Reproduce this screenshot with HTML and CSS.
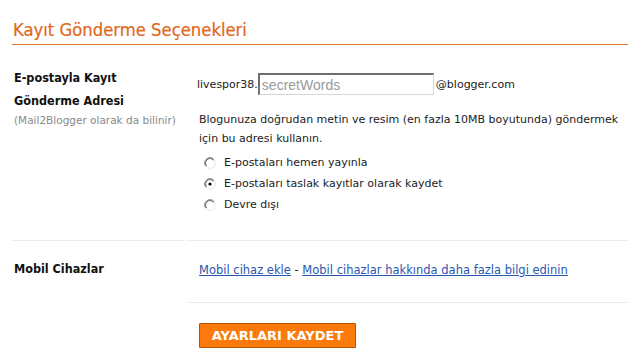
FILE: index.html
```html
<!DOCTYPE html>
<html lang="tr">
<head>
<meta charset="utf-8">
<title>Kayıt Gönderme Seçenekleri</title>
<link rel="stylesheet" href="styles.css">
</head>
<body>
<div class="page">
  <h2 class="title">Kayıt Gönderme Seçenekleri</h2>
  <div class="settings">
    <div class="label-cell row1">
      <div class="label">E-postayla Kayıt<br>Gönderme Adresi</div>
      <div class="note">(Mail2Blogger olarak da bilinir)</div>
    </div>
    <div class="content-cell row1">
      <div class="email-line">
        <span>livespor38.</span><input class="email-input" type="text" value="secretWords"><span>@blogger.com</span>
      </div>
      <p class="desc">Blogunuza doğrudan metin ve resim (en fazla 10MB boyutunda) göndermek için bu adresi kullanın.</p>
      <div class="radios">
        <label class="radio-row">
          <svg class="radio" width="12" height="12" viewBox="0 0 12 12"><path d="M10.2 2.6 A5.2 5.2 0 0 0 1.8 9.4" fill="none" stroke="#808080" stroke-width="1"/><path d="M9.4 3.3 A4.2 4.2 0 0 0 2.6 8.7" fill="none" stroke="#404040" stroke-width="1"/><path d="M1.8 9.4 A5.2 5.2 0 0 0 10.2 2.6" fill="none" stroke="#e8e8e8" stroke-width="1"/><circle cx="6" cy="6" r="3.7" fill="#fff"/></svg>
          <span>E-postaları hemen yayınla</span>
        </label>
        <label class="radio-row">
          <svg class="radio" width="12" height="12" viewBox="0 0 12 12"><path d="M10.2 2.6 A5.2 5.2 0 0 0 1.8 9.4" fill="none" stroke="#808080" stroke-width="1"/><path d="M9.4 3.3 A4.2 4.2 0 0 0 2.6 8.7" fill="none" stroke="#404040" stroke-width="1"/><path d="M1.8 9.4 A5.2 5.2 0 0 0 10.2 2.6" fill="none" stroke="#e8e8e8" stroke-width="1"/><circle cx="6" cy="6" r="3.7" fill="#fff"/><circle cx="6" cy="6" r="1.6" fill="#000"/></svg>
          <span>E-postaları taslak kayıtlar olarak kaydet</span>
        </label>
        <label class="radio-row">
          <svg class="radio" width="12" height="12" viewBox="0 0 12 12"><path d="M10.2 2.6 A5.2 5.2 0 0 0 1.8 9.4" fill="none" stroke="#808080" stroke-width="1"/><path d="M9.4 3.3 A4.2 4.2 0 0 0 2.6 8.7" fill="none" stroke="#404040" stroke-width="1"/><path d="M1.8 9.4 A5.2 5.2 0 0 0 10.2 2.6" fill="none" stroke="#e8e8e8" stroke-width="1"/><circle cx="6" cy="6" r="3.7" fill="#fff"/></svg>
          <span>Devre dışı</span>
        </label>
      </div>
    </div>
    <div class="label-cell row2">
      <div class="label">Mobil Cihazlar</div>
    </div>
    <div class="content-cell row2">
      <a href="#" class="link">Mobil cihaz ekle</a> - <a href="#" class="link">Mobil cihazlar hakkında daha fazla bilgi edinin</a>
    </div>
    <div class="label-cell row3"></div>
    <div class="content-cell row3">
      <button class="save-btn" type="button">AYARLARI KAYDET</button>
    </div>
  </div>
</div>
</body>
</html>
```

FILE: styles.css
```css
html, body {
  margin: 0;
  padding: 0;
  background: #fff;
}

body {
  font-family: "DejaVu Sans", sans-serif;
  font-size: 11px;
  color: #222;
}

.page {
  padding: 19px 0 0 12px;
}

.title {
  margin: 0;
  font-family: "DejaVu Sans Condensed", "DejaVu Sans", sans-serif;
  font-size: 18.3px;
  font-weight: normal;
  color: #e2671b;
  line-height: 22px;
  padding: 0 0 3px 1px;
  border-bottom: 1px solid #d9783a;
  -webkit-text-stroke: 0.2px #e2671b;
}

.settings {
  display: grid;
  grid-template-columns: 173px 1fr;
  column-gap: 2px;
}

.label-cell {
  padding-left: 2px;
}

.label {
  font-family: "DejaVu Sans Condensed", "DejaVu Sans", sans-serif;
  font-size: 12.5px;
  font-weight: bold;
  line-height: 23px;
  color: #111;
}

.note {
  font-size: 10.5px;
  color: #888;
  line-height: 16px;
}

.row1 {
  border-bottom: 1px solid #ececec;
}

.label-cell.row1 {
  padding-top: 21px;
}

.content-cell {
  padding-left: 12px;
}

.content-cell.row1 {
  padding-top: 28px;
  padding-bottom: 25px;
}

.email-line {
  display: flex;
  align-items: center;
  height: 22px;
  margin-left: -2px;
}

.email-input {
  width: 176px;
  height: 22px;
  box-sizing: border-box;
  margin: 0 2px 0 0;
  padding: 1px 2px 0;
  border-style: solid;
  border-width: 2px 1px 1px 2px;
  border-color: #6f6f6f #d6d6d6 #d6d6d6 #6f6f6f;
  font-family: "Liberation Sans", Arial, sans-serif;
  font-size: 14px;
  color: #9a9a9a;
  background: #fff;
}

.desc {
  margin: 15px 0 0;
  line-height: 19px;
  color: #222;
}

.radios {
  display: flex;
  flex-direction: column;
  margin-top: 4px;
}

.radio-row {
  display: flex;
  align-items: center;
  height: 21px;
  gap: 8px;
  padding-left: 5px;
}

.radio {
  flex: none;
}

.label-cell.row2 {
  padding-top: 16px;
}

.content-cell.row2 {
  padding-top: 20px;
  padding-bottom: 23px;
  line-height: 18px;
  font-size: 11.5px;
  border-bottom: 1px solid #ececec;
}

.link {
  color: #2a56b0;
  text-decoration: underline;
}

.content-cell.row3 {
  padding-top: 20px;
}

.save-btn {
  width: 157px;
  height: 25px;
  background: #fb7a0b;
  border: 1px solid #b4550c;
  border-radius: 1px;
  color: #fff;
  font-family: "DejaVu Sans", sans-serif;
  font-weight: bold;
  font-size: 13px;
  padding: 0;
  box-shadow: 0 1px 1px rgba(0,0,0,0.15);
}
```
